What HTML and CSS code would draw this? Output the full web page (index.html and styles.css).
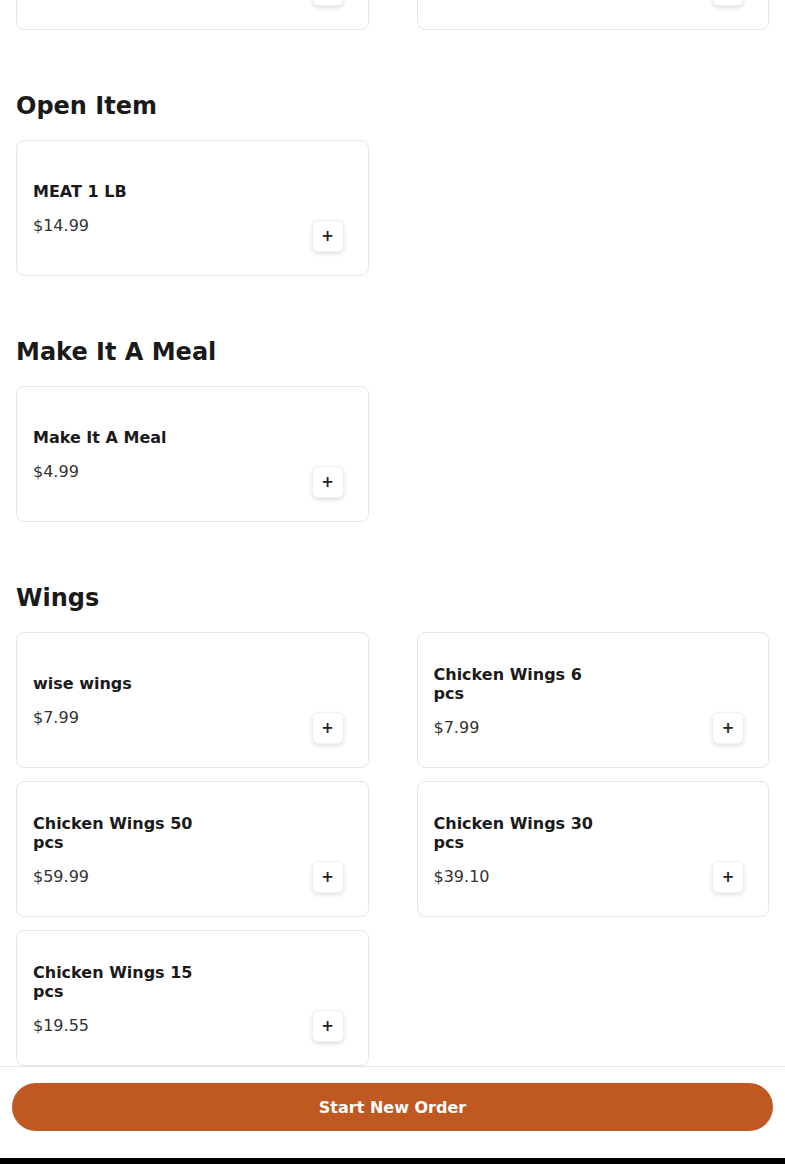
FILE: index.html
```html
<!DOCTYPE html>
<html lang="en">
<head>
  <meta charset="UTF-8" />
  <meta name="viewport" content="width=device-width, initial-scale=1.0" />
  <title>Menu</title>
  <link rel="stylesheet" href="styles.css">
</head>
<body>
  <main class="menu">
    <section class="section first">
      <div class="grid">
        <div class="card">
          <div class="info">
            <h3 class="name">Chicken Tenders 3 pcs</h3>
            <div class="price">$6.99</div>
          </div>
          <button class="add" aria-label="Add">+</button>
        </div>
        <div class="card">
          <div class="info">
            <h3 class="name">Chicken Tenders 5 pcs</h3>
            <div class="price">$9.99</div>
          </div>
          <button class="add" aria-label="Add">+</button>
        </div>
      </div>
    </section>

    <section class="section">
      <h2 class="title">Open Item</h2>
      <div class="grid">
        <div class="card">
          <div class="info">
            <h3 class="name">MEAT 1 LB</h3>
            <div class="price">$14.99</div>
          </div>
          <button class="add" aria-label="Add">+</button>
        </div>
      </div>
    </section>

    <section class="section">
      <h2 class="title">Make It A Meal</h2>
      <div class="grid">
        <div class="card">
          <div class="info">
            <h3 class="name">Make It A Meal</h3>
            <div class="price">$4.99</div>
          </div>
          <button class="add" aria-label="Add">+</button>
        </div>
      </div>
    </section>

    <section class="section">
      <h2 class="title">Wings</h2>
      <div class="grid">
        <div class="card">
          <div class="info">
            <h3 class="name">wise wings</h3>
            <div class="price">$7.99</div>
          </div>
          <button class="add" aria-label="Add">+</button>
        </div>
        <div class="card">
          <div class="info">
            <h3 class="name">Chicken Wings 6 pcs</h3>
            <div class="price">$7.99</div>
          </div>
          <button class="add" aria-label="Add">+</button>
        </div>
        <div class="card">
          <div class="info">
            <h3 class="name">Chicken Wings 50 pcs</h3>
            <div class="price">$59.99</div>
          </div>
          <button class="add" aria-label="Add">+</button>
        </div>
        <div class="card">
          <div class="info">
            <h3 class="name">Chicken Wings 30 pcs</h3>
            <div class="price">$39.10</div>
          </div>
          <button class="add" aria-label="Add">+</button>
        </div>
        <div class="card">
          <div class="info">
            <h3 class="name">Chicken Wings 15 pcs</h3>
            <div class="price">$19.55</div>
          </div>
          <button class="add" aria-label="Add">+</button>
        </div>
      </div>
    </section>
  </main>

  <footer class="footer">
    <button class="start">Start New Order</button>
  </footer>
  <div class="home-bar"></div>
</body>
</html>
```

FILE: styles.css
```css
* {
  box-sizing: border-box;
}
body {
  margin: 0;
  font-family: "DejaVu Sans", sans-serif;
  background: #fff;
  color: #1a1a1a;
}
.menu {
  padding: 0 16px 120px;
}
.section {
  margin-top: 61px;
}
.section.first {
  margin-top: -106px;
}
.title {
  margin: 0 0 19px;
  font-size: 24px;
  line-height: 30px;
  font-weight: bold;
  color: #1a1a1a;
}
.grid {
  display: grid;
  grid-template-columns: 1fr 1fr;
  column-gap: 48px;
  row-gap: 13px;
}
.card {
  display: flex;
  justify-content: space-between;
  align-items: center;
  height: 136px;
  padding: 24px 24px 23px 16px;
  border: 1px solid #e6e6e6;
  border-radius: 8px;
  background: #fff;
}
.info {
  max-width: 176px;
  padding-top: 2px;
}
.name {
  margin: 0;
  font-size: 16px;
  line-height: 19px;
  font-weight: bold;
  color: #1a1a1a;
}
.price {
  margin-top: 14px;
  font-size: 16px;
  line-height: 22px;
  color: #333;
}
.add {
  align-self: flex-end;
  width: 32px;
  height: 32px;
  padding: 0;
  border: 1px solid #f0f0f0;
  border-radius: 6px;
  background: #fff;
  box-shadow: 0 2px 4px rgba(0,0,0,0.12);
  font-family: "DejaVu Sans", sans-serif;
  font-size: 15px;
  font-weight: bold;
  line-height: 30px;
  color: #222;
  cursor: pointer;
}
.footer {
  position: fixed;
  left: 0;
  right: 0;
  bottom: 6px;
  padding: 16px 12px 27px;
  background: #fff;
  border-top: 1px solid #e6e6e6;
}
.start {
  display: block;
  width: 100%;
  height: 48px;
  border: none;
  border-radius: 24px;
  background: #c05822;
  color: #fff;
  font-family: "DejaVu Sans", sans-serif;
  font-size: 16px;
  font-weight: bold;
  cursor: pointer;
}
.home-bar {
  position: fixed;
  left: 0;
  right: 0;
  bottom: 0;
  height: 6px;
  background: #000;
}
```
